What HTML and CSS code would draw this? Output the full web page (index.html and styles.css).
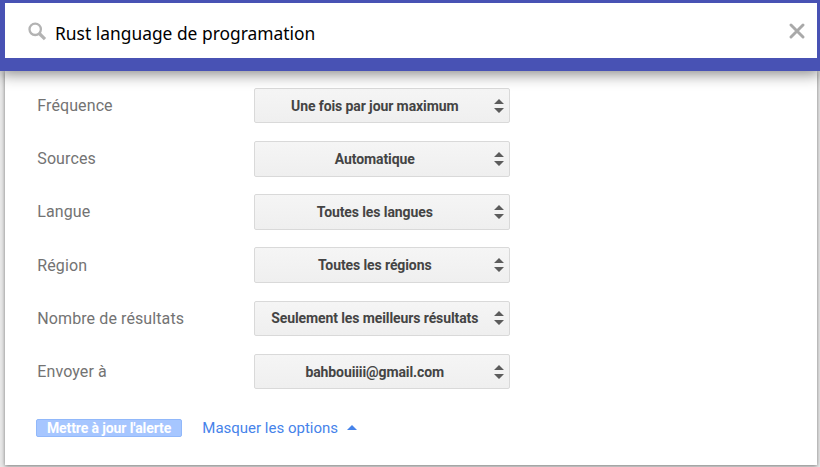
FILE: index.html
```html
<!DOCTYPE html>
<html lang="fr">
<head>
<meta charset="utf-8">
<title>Alertes</title>
<link rel="stylesheet" href="styles.css">
</head>
<body>
<header class="topbar">
  <div class="search">
    <svg class="search-icon" width="20" height="20" viewBox="0 0 20 20"><circle cx="8.2" cy="7.3" r="5.7" fill="none" stroke="#b3b3b3" stroke-width="2.3"/><path d="M12.3 11.5L18 17.1" stroke="#b3b3b3" stroke-width="3.2"/></svg>
    <span class="query">Rust language de programation</span>
    <svg class="close" width="16" height="16" viewBox="0 0 16 16"><path d="M2 2L14 14M14 2L2 14" stroke="#a9a9a9" stroke-width="2.9" stroke-linecap="round"/></svg>
  </div>
</header>
<main class="card">
  <div class="row"><span class="label">Fréquence</span><div class="select"><span>Une fois par jour maximum</span><svg class="arrows" width="10" height="14" viewBox="0 0 10 14"><path d="M0 5L5 0L10 5ZM0 9H10L5 14Z"/></svg></div></div>
  <div class="row"><span class="label">Sources</span><div class="select"><span>Automatique</span><svg class="arrows" width="10" height="14" viewBox="0 0 10 14"><path d="M0 5L5 0L10 5ZM0 9H10L5 14Z"/></svg></div></div>
  <div class="row"><span class="label">Langue</span><div class="select"><span>Toutes les langues</span><svg class="arrows" width="10" height="14" viewBox="0 0 10 14"><path d="M0 5L5 0L10 5ZM0 9H10L5 14Z"/></svg></div></div>
  <div class="row"><span class="label">Région</span><div class="select"><span>Toutes les régions</span><svg class="arrows" width="10" height="14" viewBox="0 0 10 14"><path d="M0 5L5 0L10 5ZM0 9H10L5 14Z"/></svg></div></div>
  <div class="row"><span class="label">Nombre de résultats</span><div class="select"><span>Seulement les meilleurs résultats</span><svg class="arrows" width="10" height="14" viewBox="0 0 10 14"><path d="M0 5L5 0L10 5ZM0 9H10L5 14Z"/></svg></div></div>
  <div class="row"><span class="label">Envoyer à</span><div class="select"><span>bahbouiiii@gmail.com</span><svg class="arrows" width="10" height="14" viewBox="0 0 10 14"><path d="M0 5L5 0L10 5ZM0 9H10L5 14Z"/></svg></div></div>
  <div class="actions">
    <div class="update">Mettre à jour l'alerte</div>
    <span class="toggle">Masquer les options</span>
    <svg class="up" width="10" height="5" viewBox="0 0 10 5"><path d="M0 5L5 0L10 5Z" fill="#4683ea"/></svg>
  </div>
</main>
</body>
</html>
```
FILE: styles.css
```css
* { box-sizing: border-box; }
body {
  margin: 0;
  height: 467px;
  overflow: hidden;
  background: #e8e8e8;
  font-family: Roboto, sans-serif;
}
.topbar {
  position: relative;
  z-index: 1;
  height: 71px;
  padding: 3px 3px 13px 5px;
  background: #4852b4;
  box-shadow: 0 3px 14px rgba(0, 0, 0, .48);
}
.search {
  display: flex;
  align-items: center;
  height: 55px;
  padding: 0 12px 0 22px;
  background: #fff;
}
.search-icon { margin-bottom: -3px; }
.query {
  flex: 1;
  margin: 4px 0 0 8px;
  font: 18.8px/24px "Noto Sans", sans-serif;
  color: #000;
  transform: scaleX(.926);
  transform-origin: left;
}
.close { margin-top: 1px; }
.card {
  height: 394px;
  margin: 0 3px 0 5px;
  padding: 16.8px 0 0 31px;
  background: #fff;
  box-shadow: 0 1px 4px rgba(0, 0, 0, .48);
}
.row {
  display: flex;
  height: 35.6px;
  margin-bottom: 17.6px;
  align-items: center;
}
.label {
  width: 218px;
  padding-left: 1.3px;
  font-size: 16px;
  letter-spacing: .1px;
  color: #737373;
}
.select {
  display: flex;
  align-items: center;
  width: 256px;
  height: 100%;
  padding: 0 5.5px 0 1px;
  border: 1px solid #d9d9d9;
  border-radius: 2px;
  background: linear-gradient(#f5f5f5, #efefef);
  color: #444;
  font-size: 14px;
  font-weight: 700;
  letter-spacing: -.1px;
}
.select span { flex: 1; text-align: center; white-space: nowrap; }
.arrows { fill: #5c5c5c; }
.actions {
  display: flex;
  align-items: center;
  height: 18px;
  margin-top: 29.4px;
}
.row:last-of-type { margin-bottom: 0; }
.row + .actions { margin-top: 29.2px; padding-top: 0; }
.update {
  width: 146px;
  height: 18px;
  border: 1px solid #91b8fa;
  border-radius: 2px;
  background: #a6c6ff;
  color: #fff;
  font-size: 14px;
  font-weight: 700;
  letter-spacing: -.1px;
  line-height: 16px;
  text-align: center;
}
.toggle { margin-left: 20.3px; color: #4683ea; font-size: 15px; }
.up { margin-left: 9px; }
```
